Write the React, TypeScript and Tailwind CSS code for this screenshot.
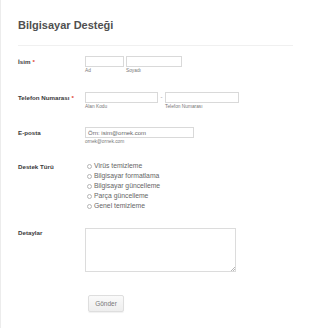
import React from "react";

const options = [
    "Virüs temizleme",
    "Bilgisayar formatlama",
    "Bilgisayar güncelleme",
    "Parça güncelleme",
    "Genel temizleme",
];

const Label = ({text, required, className = ""}: { text: string; required?: boolean; className?: string }) => (
    <div className={`w-[67px] shrink-0 text-[6.2px] font-bold text-[#3a3a3a] ${className}`}>
        {text}
        {required && <span className="text-[#e03c31] ml-[2px]">*</span>}
    </div>
);

const Box = ({className = "", children}: { className?: string; children?: React.ReactNode }) => (
    <div className={`h-[11px] border border-[#d9d9d9] bg-white ${className}`}>{children}</div>
);

const Sub = ({text}: { text: string }) => (
    <div className="text-[4.8px] leading-[7px] text-[#777]">{text}</div>
);

export default function App() {
    return (
        <div
            className="w-[310px] h-[328px] bg-white border-l border-[#ececec] overflow-hidden"
            style={{fontFamily: '"Liberation Sans", Arial, sans-serif'}}
        >
            <div className="pl-[17px] pr-[17px]">
                <h1 className="mt-[19px] text-[11px] leading-[13px] font-bold text-[#505050]">
                    Bilgisayar Desteği
                </h1>
                <div className="mt-[13px] h-px bg-[#f0f0f0]"/>

                {/* İsim */}
                <div className="mt-[10px] flex">
                    <Label text="İsim" required className="leading-[11px]"/>
                    <div className="flex gap-[2px]">
                        <div className="w-[39px]">
                            <Box/>
                            <Sub text="Ad"/>
                        </div>
                        <div className="w-[56px]">
                            <Box/>
                            <Sub text="Soyadı"/>
                        </div>
                    </div>
                </div>

                {/* Telefon */}
                <div className="mt-[18px] flex">
                    <Label text="Telefon Numarası" required className="leading-[11px]"/>
                    <div className="flex">
                        <div className="w-[73px]">
                            <Box/>
                            <Sub text="Alan Kodu"/>
                        </div>
                        <div className="w-[7px] h-[11px] flex items-center justify-center text-[6px] text-[#888]">-</div>
                        <div className="w-[74px]">
                            <Box/>
                            <Sub text="Telefon Numarası"/>
                        </div>
                    </div>
                </div>

                {/* E-posta */}
                <div className="mt-[17px] flex">
                    <Label text="E-posta" className="leading-[11px]"/>
                    <div className="w-[109px]">
                        <Box className="flex items-center px-[2px]">
                            <span className="text-[6px] leading-none text-[#666]">Örn: isim@ornek.com</span>
                        </Box>
                        <Sub text="ornek@ornek.com"/>
                    </div>
                </div>

                {/* Destek Türü */}
                <div className="mt-[16px] flex">
                    <Label text="Destek Türü" className="leading-[10px] pt-px"/>
                    <div className="flex flex-col pl-[2px]">
                        {options.map((o) => (
                            <div key={o} className="h-[10px] flex items-center gap-[2px]">
                                <span className="w-[5px] h-[5px] rounded-full border border-[#b5b5b5] bg-white"/>
                                <span className="text-[6.8px] text-[#666] leading-none">{o}</span>
                            </div>
                        ))}
                    </div>
                </div>

                {/* Detaylar */}
                <div className="mt-[17px] flex">
                    <Label text="Detaylar" className="leading-[10px]"/>
                    <div className="relative">
                        <textarea
                            className="block w-[151px] h-[44px] border border-[#dcdcdc] bg-white outline-none resize-none"
                            aria-label="Detaylar"
                        />
                        <svg className="absolute right-[1px] bottom-[1px]" width="5" height="5" viewBox="0 0 5 5">
                            <path d="M1 5 L5 1 M3 5 L5 3" stroke="#999" strokeWidth="0.7"/>
                        </svg>
                    </div>
                </div>

                <div className="mt-[23px] flex">
                    <div className="w-[67px] shrink-0"/>
                    <button
                        className="ml-[3px] w-[36px] h-[17px] rounded-[2px] border border-[#dedede] bg-gradient-to-b from-[#fafafa] to-[#eeeeee] text-[6.5px] text-[#777] shadow-[0_1px_1px_rgba(0,0,0,0.06)]"
                    >
                        Gönder
                    </button>
                </div>
            </div>
        </div>
    );
}
